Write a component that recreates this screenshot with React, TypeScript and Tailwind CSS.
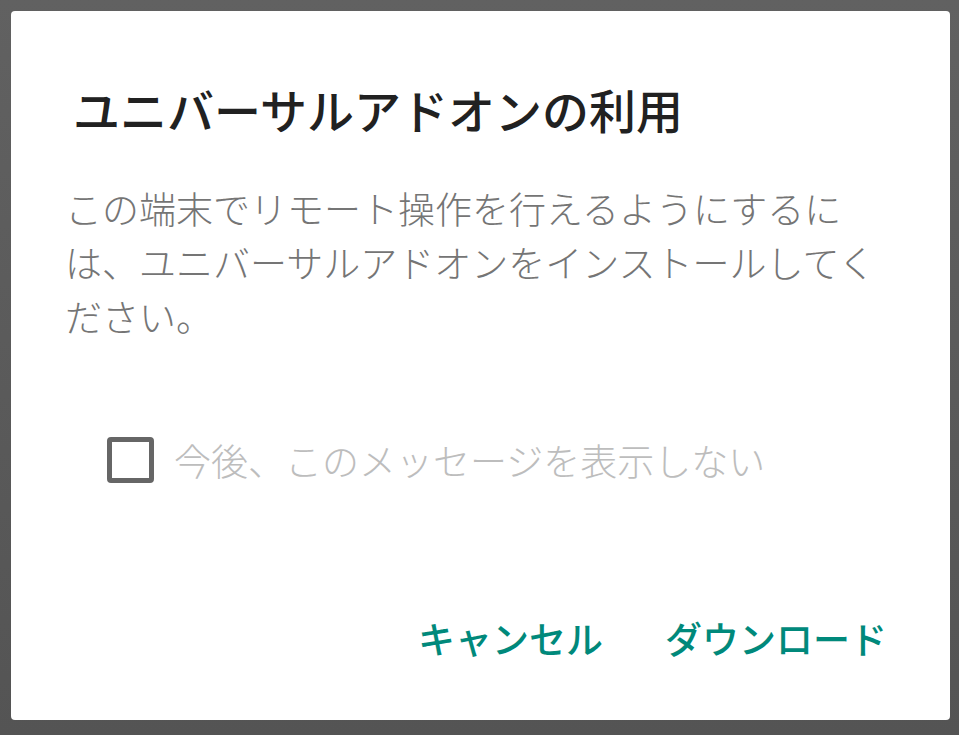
import { useState } from 'react';

export default function App() {
  const [dontShow, setDontShow] = useState(false);

  return (
    <div
      className="w-[959px] h-[735px] bg-linear-to-b from-[#616161] to-[#545454] p-[11px] pr-[9px] pb-[15px]"
      style={{ fontFamily: '"Noto Sans CJK JP", "Noto Sans", sans-serif' }}
    >
      <div className="w-full h-full bg-white rounded-[4px] flex flex-col">
        {/* タイトル */}
        <h1 className="mt-[68px] ml-[62px] text-[47px] leading-[60px] font-medium text-[#212121]">
          ユニバーサルアドオンの利用
        </h1>

        {/* 本文 */}
        <p className="mt-[42px] ml-[54px] w-[830px] text-[37px] leading-[54px] font-light text-[#757575]">
          この端末でリモート操作を行えるようにするには、ユニバーサルアドオンをインストールしてください。
        </p>

        {/* チェックボックス */}
        <label className="mt-[92px] ml-[96px] flex items-center gap-[20px] cursor-pointer">
          <span
            className={
              dontShow
                ? 'w-[47px] h-[46px] rounded-[4px] border-[5px] border-[#00897b] bg-[#00897b]'
                : 'w-[47px] h-[46px] rounded-[4px] border-[5px] border-[#666666]'
            }
          />
          <input
            type="checkbox"
            className="hidden"
            checked={dontShow}
            onChange={(e) => setDontShow(e.target.checked)}
          />
          <span className="text-[37px] leading-[50px] font-light text-[#bdbdbd]">今後、このメッセージを表示しない</span>
        </label>

        {/* ボタン */}
        <div className="mt-auto mb-[57px] mr-[63px] flex justify-end gap-[62px]">
          <button className="text-[37px] leading-[50px] font-medium text-[#00897b]">キャンセル</button>
          <button className="text-[37px] leading-[50px] font-medium text-[#00897b]">ダウンロード</button>
        </div>
      </div>
    </div>
  );
}
